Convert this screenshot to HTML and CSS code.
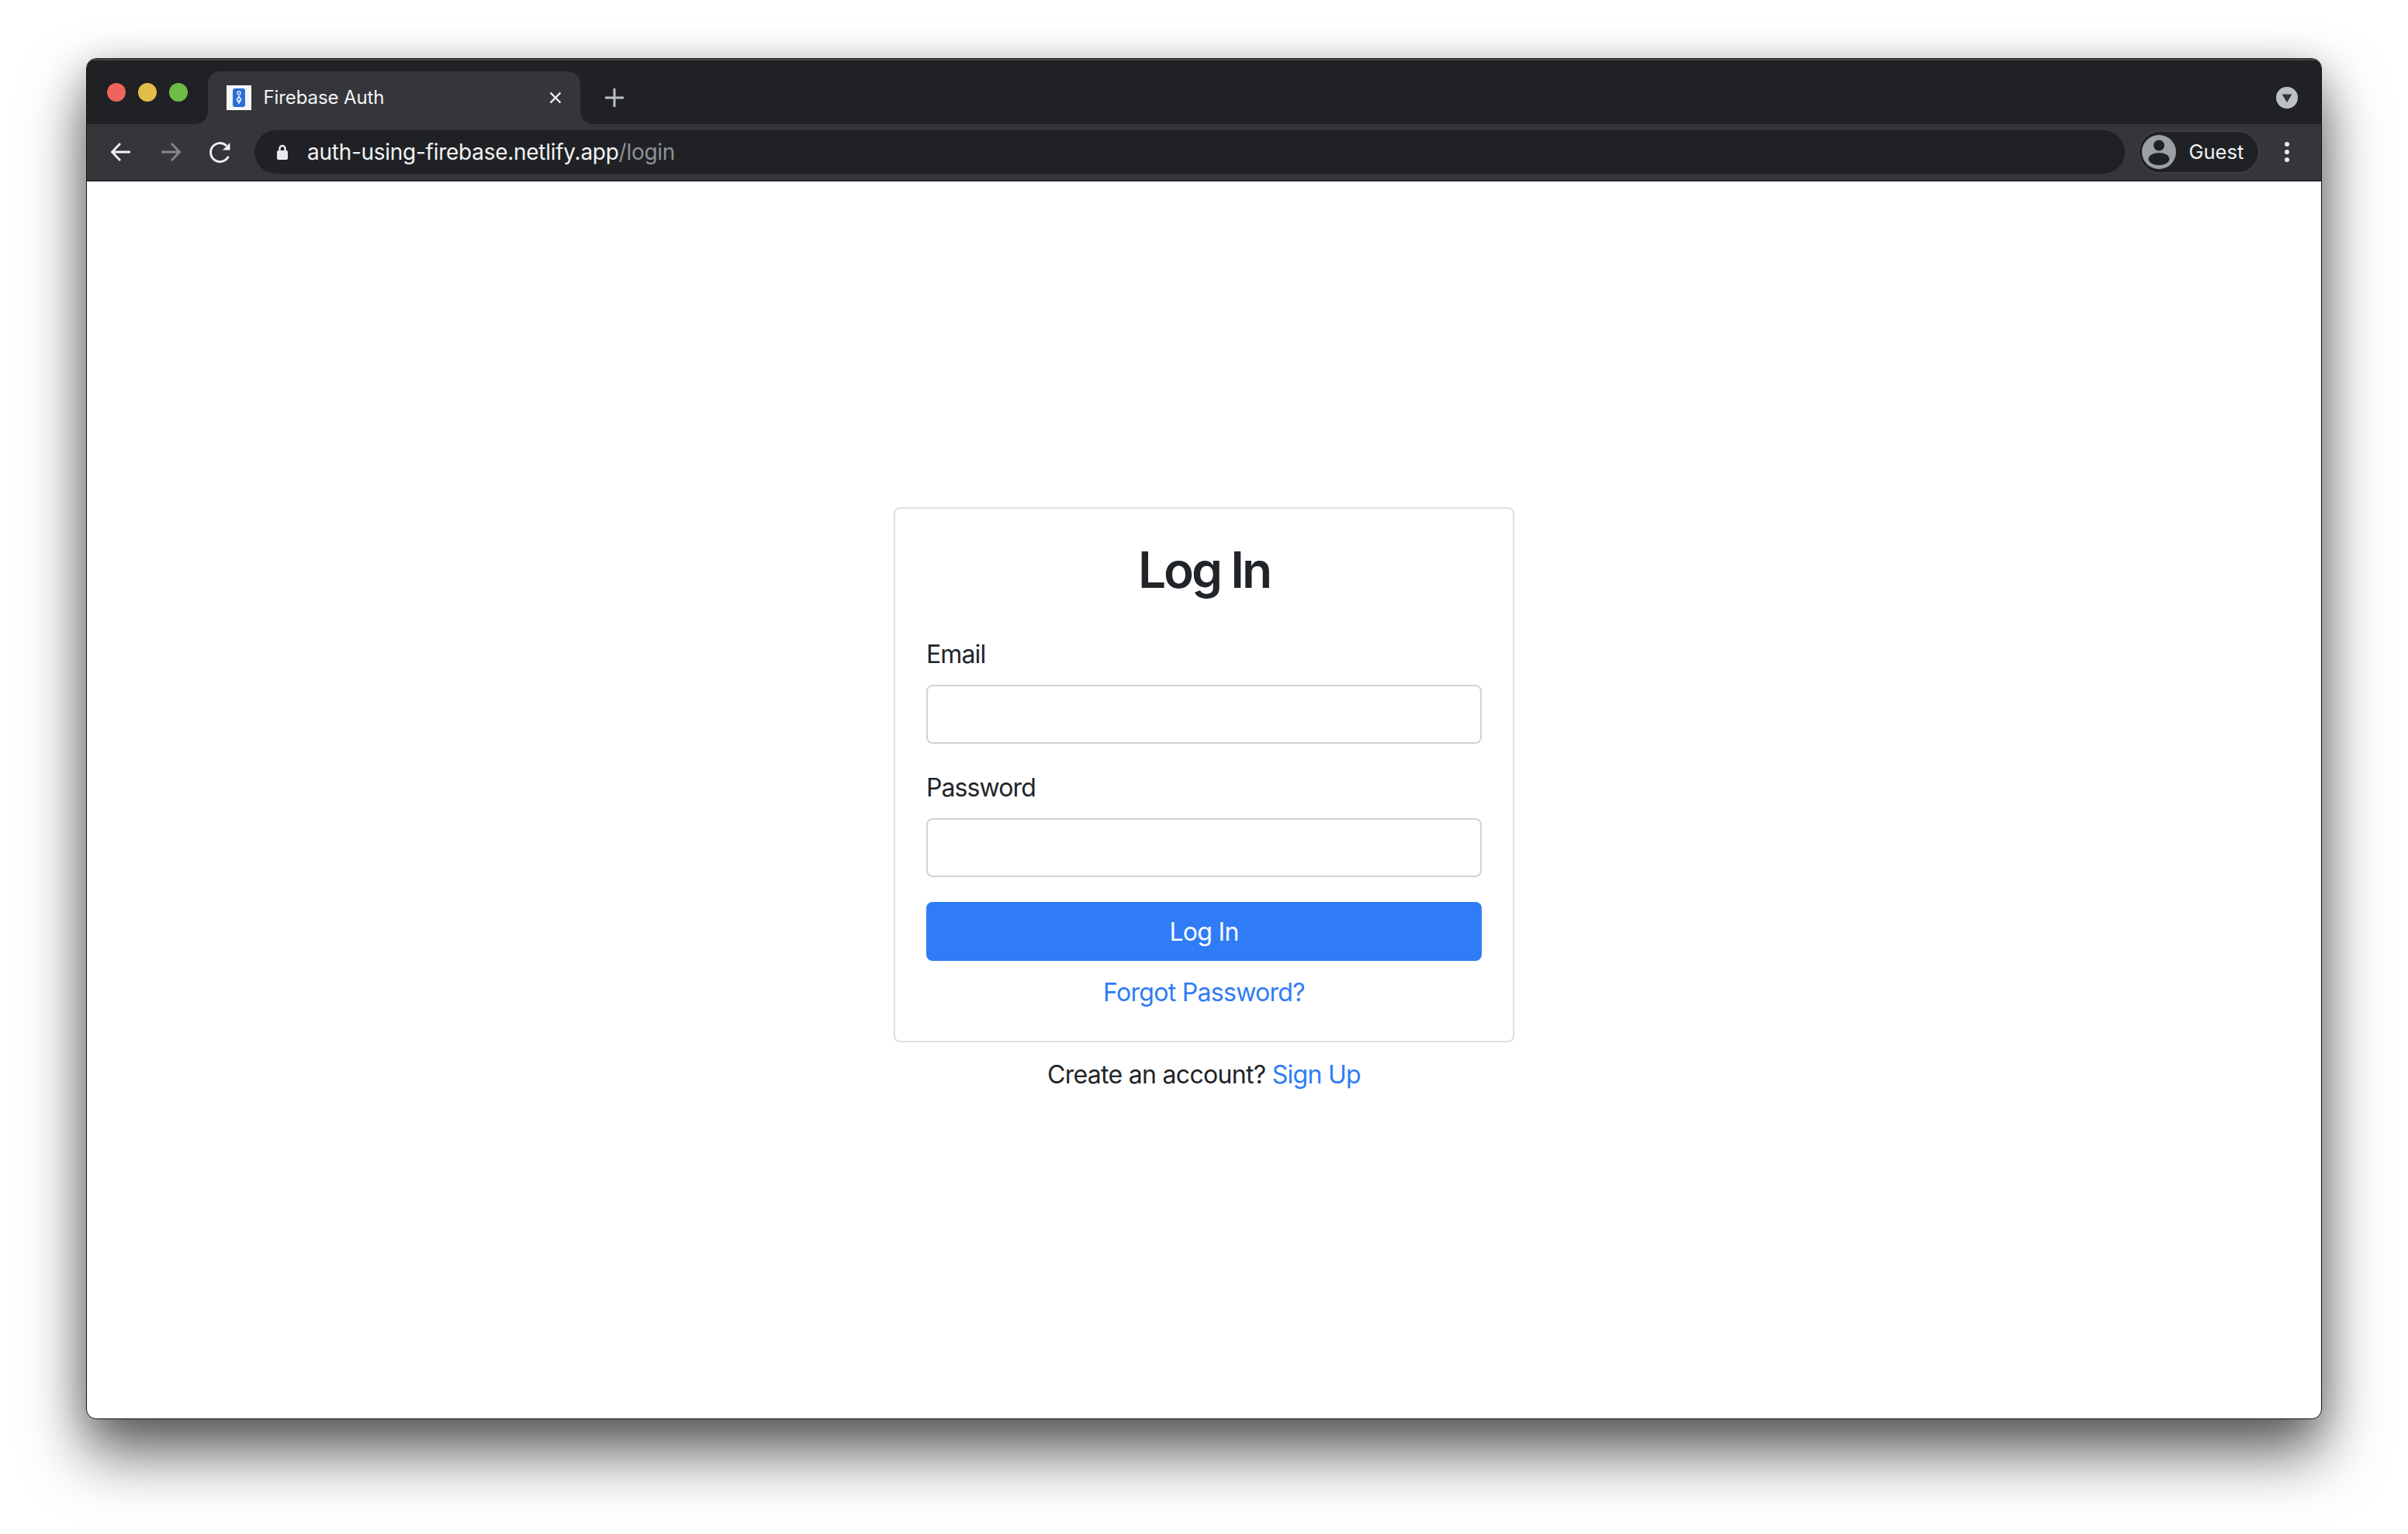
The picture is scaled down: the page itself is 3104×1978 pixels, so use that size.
FILE: index.html
```html
<!DOCTYPE html>
<html lang="en">
<head>
<meta charset="utf-8">
<title>Firebase Auth</title>
<link rel="stylesheet" href="styles.css">
</head>
<body>
<div class="window">
  <div class="tabstrip">
    <div class="lights">
      <span class="light red"></span>
      <span class="light yellow"></span>
      <span class="light green"></span>
    </div>
    <div class="tab">
      <span class="favicon">
        <svg class="favicon-art" viewBox="0 0 32 32">
          <rect x="8" y="4" width="16" height="24" rx="3" fill="#2a6fd6"/>
          <circle cx="16" cy="10" r="2" fill="none" stroke="#dfe9fa" stroke-width="1.5"/>
          <path d="M16 12.500l3.500 6-3.500 6-3.500-6z" fill="#dfe9fa"/>
          <circle cx="16" cy="18" r="1.300" fill="#2a6fd6"/>
        </svg>
      </span>
      <span class="tab-title">Firebase Auth</span>
      <svg class="tab-close" viewBox="0 0 20 20"><path d="M3.500 3.500l13 13M16.500 3.500l-13 13"/></svg>
    </div>
    <svg class="new-tab" viewBox="0 0 24 24"><path d="M12 1v22M1 12h22"/></svg>
    <span class="strip-gap"></span>
    <span class="tab-search">
      <svg class="tab-search-art" viewBox="0 0 28 28"><path d="M7.500 9.500h13L14 20z"/></svg>
    </span>
  </div>
  <div class="toolbar">
    <svg class="nav-icon" viewBox="0 0 32 32"><path d="M28 16H5M15 5L4.500 16 15 27"/></svg>
    <svg class="nav-icon dim" viewBox="0 0 32 32"><path d="M4 16h23M17 5l10.500 11L17 27"/></svg>
    <svg class="nav-icon" viewBox="0 0 32 32"><path d="M26.400 21.600A12 12 0 1 1 24 8"/><path class="fill" d="M28.500 4V13.500H19z"/></svg>
    <div class="omnibox">
      <svg class="lock" viewBox="0 0 16 22"><path class="shackle" d="M4.500 10V6.500a3.500 3.500 0 0 1 7 0V10"/><rect x="1" y="9" width="14" height="12" rx="2"/></svg>
      <span class="url">auth-using-firebase.netlify.app<span class="url-path">/login</span></span>
    </div>
    <div class="profile">
      <svg class="avatar" viewBox="0 0 44 44">
        <circle cx="22" cy="22" r="22" fill="#9aa0a6"/>
        <circle cx="22" cy="13.500" r="7" fill="#202124"/>
        <ellipse cx="22" cy="31" rx="13.500" ry="8" fill="#202124"/>
      </svg>
      <span class="profile-name">Guest</span>
    </div>
    <svg class="kebab" viewBox="0 0 8 28"><circle cx="4" cy="4" r="3"/><circle cx="4" cy="14" r="3"/><circle cx="4" cy="24" r="3"/></svg>
  </div>
  <main class="content">
    <section class="card">
      <h2 class="title">Log In</h2>
      <form class="form">
        <label class="label" for="email">Email</label>
        <input class="input" id="email" type="email">
        <label class="label" for="password">Password</label>
        <input class="input" id="password" type="password">
        <button class="submit" type="button">Log In</button>
      </form>
      <p class="forgot"><a class="link" href="#">Forgot Password?</a></p>
    </section>
    <p class="signup">Create an account? <a class="link" href="#">Sign Up</a></p>
  </main>
</div>
</body>
</html>
```
FILE: styles.css
```css
* { box-sizing: border-box; }
html, body { margin: 0; height: 100%; background: #fff; }
body {
  padding: 75px 111px 0;
  overflow: hidden;
  font-family: Inter, "Liberation Sans", sans-serif;
}
.window {
  display: flex;
  flex-direction: column;
  height: 1755px;
  background: #fff;
  border-radius: 13px;
  box-shadow: 0 44px 80px rgba(0,0,0,.6), 0 10px 50px rgba(0,0,0,.22);
  border: 1.5px solid #111;
  overflow: hidden;
}
.tabstrip {
  display: flex;
  align-items: flex-end;
  height: 83.5px;
  flex: none;
  background: #202124;
  box-shadow: inset 0 1.5px 0 #55565a;
}
.lights {
  display: flex;
  gap: 16px;
  align-self: flex-start;
  padding: 31px 0 0 25.500px;
  width: 155.500px;
  flex: none;
}
.light { width: 24px; height: 24px; border-radius: 50%; }
.red { background: #ef645c; }
.yellow { background: #e2bd48; }
.green { background: #6fbd47; }
.tab {
  position: relative;
  display: flex;
  align-items: center;
  width: 480px;
  height: 68px;
  flex: none;
  padding: 0 22px 0 24px;
  background: #35363a;
  border-radius: 16px 16px 0 0;
}
.tab::before, .tab::after {
  content: "";
  position: absolute;
  bottom: 0;
  width: 16px;
  height: 16px;
}
.tab::before { left: -16px; background: radial-gradient(circle at 0 0, transparent 15.500px, #35363a 16px); }
.tab::after { right: -16px; background: radial-gradient(circle at 100% 0, transparent 15.500px, #35363a 16px); }
.favicon {
  display: flex;
  width: 32px;
  height: 32px;
  flex: none;
  background: #f6f6f6;
}
.favicon-art { width: 32px; height: 32px; }
.tab-title {
  flex: 1;
  margin-left: 16px;
  font-size: 24px;
  letter-spacing: -0.1px;
  color: #f1f3f4;
}
.tab-close {
  width: 20px;
  height: 20px;
  fill: none;
  stroke: #f1f3f4;
  stroke-width: 2.400;
}
.new-tab {
  align-self: center;
  width: 24px;
  height: 24px;
  margin: 17px 0 0 32px;
  fill: none;
  stroke: #bdc1c6;
  stroke-width: 3;
  stroke-linecap: round;
}
.strip-gap { flex: 1; }
.tab-search {
  display: flex;
  align-self: center;
  width: 28px;
  height: 28px;
  margin: 17px 30.500px 0 0;
  border-radius: 50%;
  background: #bdc1c6;
}
.tab-search-art { width: 28px; height: 28px; fill: #35363a; }
.toolbar {
  display: flex;
  align-items: center;
  height: 74px;
  flex: none;
  padding: 0 40.500px 0 28px;
  background: #35363a;
  border-bottom: 2px solid #28292c;
}
.nav-icon {
  width: 32px;
  height: 32px;
  margin-right: 32px;
  flex: none;
  fill: none;
  stroke: #f1f3f4;
  stroke-width: 2.800;
}
.nav-icon .fill { fill: #f1f3f4; stroke: none; }
.nav-icon.dim { stroke: #85878a; }
.omnibox {
  display: flex;
  align-items: center;
  flex: 1;
  height: 56px;
  margin-left: -4px;
  padding-left: 28px;
  background: #202124;
  border-radius: 28px;
}
.lock { width: 16px; height: 22px; flex: none; fill: #e8eaed; }
.lock .shackle { fill: none; stroke: #e8eaed; stroke-width: 2.500; }
.url {
  margin-left: 24px;
  font-size: 28px;
  letter-spacing: -0.27px;
  color: #f1f3f4;
}
.url-path { color: #8f9296; }
.profile {
  display: flex;
  align-items: center;
  width: 157px;
  height: 56px;
  margin-left: 17px;
  flex: none;
  padding-left: 3px;
  background: #202124;
  border: 2px solid #3e3f43;
  border-radius: 28px;
}
.avatar { width: 44px; height: 44px; flex: none; }
.profile-name {
  margin-left: 17px;
  font-size: 25.500px;
  color: #f1f3f4;
}
.kebab {
  width: 8px;
  height: 28px;
  margin: 0 0 0 31px;
  flex: none;
  fill: #e8eaed;
}
.content {
  display: flex;
  flex: 1;
  flex-direction: column;
  align-items: center;
  justify-content: center;
  padding-top: 2px;
  color: #212529;
  font-size: 32px;
  line-height: 48px;
  letter-spacing: -0.7px;
}
.card {
  width: 800px;
  height: 690px;
  padding: 40px;
  background: #fff;
  border: 2px solid rgba(0,0,0,.125);
  border-radius: 8px;
}
.title {
  margin: 0 0 45px;
  font-size: 64px;
  font-weight: 600;
  line-height: 78px;
  letter-spacing: -3px;
  text-align: center;
}
.form { display: flex; flex-direction: column; }
.label { margin-bottom: 15px; padding-top: 1px; letter-spacing: -0.9px; }
.input {
  height: 76px;
  margin-bottom: 32px;
  background: #fff;
  border: 2px solid #ced4da;
  border-radius: 8px;
}
.submit {
  height: 76px;
  padding: 1px 0 0;
  color: #fff;
  font: inherit;
  letter-spacing: inherit;
  background: #2f7cf6;
  border: 0;
  border-radius: 8px;
}
.forgot { margin: 17px 0 0; text-align: center; }
.link { color: #2f7cf6; text-decoration: none; }
.signup { margin: 18px 0 0; }
```
